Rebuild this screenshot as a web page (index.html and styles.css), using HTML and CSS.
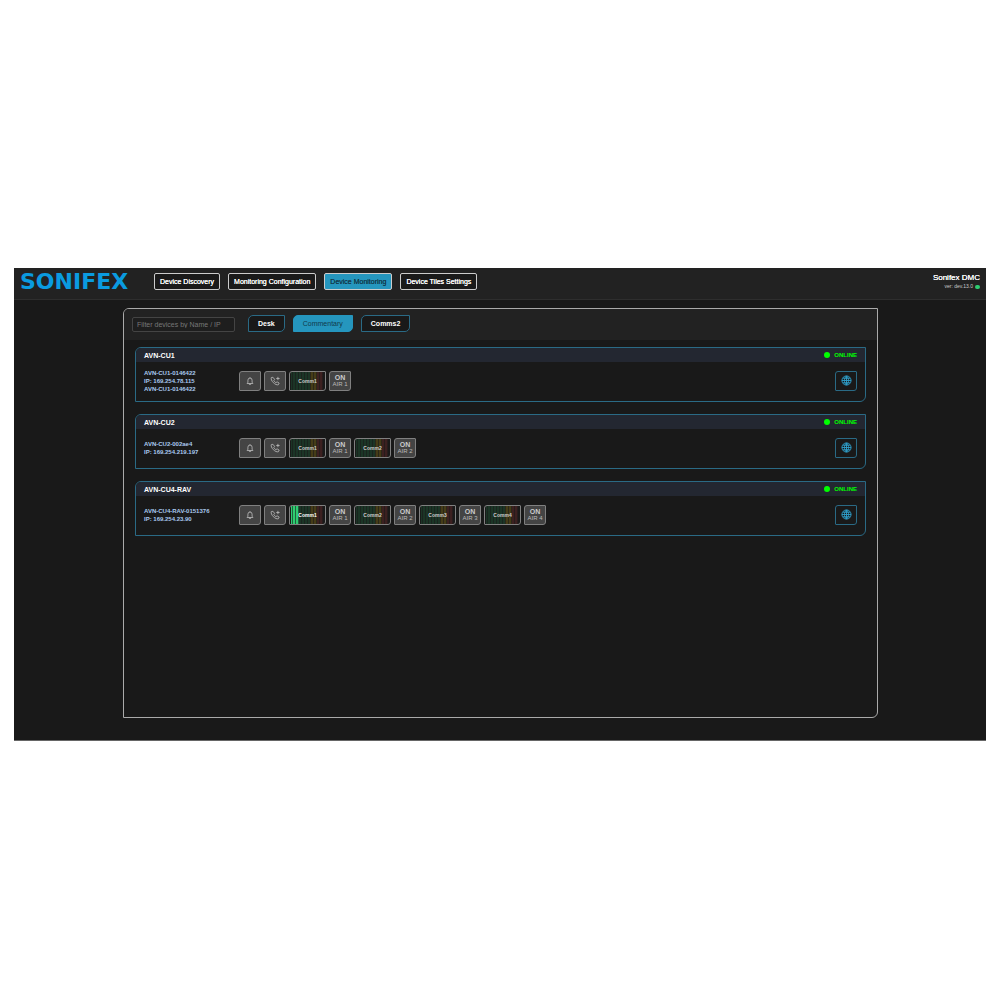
FILE: index.html
```html
<!DOCTYPE html>
<html lang="en">
<head>
    <meta charset="UTF-8">
    <meta name="viewport" content="width=device-width, initial-scale=1.0">
    <title>Sonifex DMC - Device Monitoring</title>
    <link rel="stylesheet" href="styles.css">
</head>
<body>
    <svg class="sprite" aria-hidden="true">
        <symbol id="bell" viewBox="0 0 24 24">
            <path d="M5 18h14l-2-3v-5a5 5 0 0 0-10 0v5z M10 18.500a2 2.500 0 0 0 4 0 M12 5V3"/>
        </symbol>
        <symbol id="phone" viewBox="0 0 24 24">
            <path d="M7 3 3 4c-1 3 1 8 5 12s9 6 12 5l2-4-5-3-3 2c-2-1-4-3-5-5l2-3z M15 6h8 M19 2v8"/>
        </symbol>
        <symbol id="globe" viewBox="0 0 24 24">
            <circle cx="12" cy="12" r="10"/>
            <path d="M2 12h20 M12 2v20 M4 7h16 M4 17h16 M12 2c-6 5-6 15 0 20 M12 2c6 5 6 15 0 20"/>
        </symbol>
    </svg>

    <div class="app">
        <header class="topbar">
            <div class="logo">SONIFEX</div>
            <nav class="menu">
                <button type="button">Device Discovery</button>
                <button type="button">Monitoring Configuration</button>
                <button type="button" class="active">Device Monitoring</button>
                <button type="button">Device Tiles Settings</button>
            </nav>
            <div class="version">
                <div class="product">Sonifex DMC</div>
                <div class="build">ver: dev.13.0 <span class="dot"></span></div>
            </div>
        </header>

        <main class="panel">
            <div class="toolbar">
                <input type="text" class="filter" placeholder="Filter devices by Name / IP" aria-label="Filter devices by Name / IP">
                <div class="tabs">
                    <button type="button">Desk</button>
                    <button type="button" class="active">Commentary</button>
                    <button type="button">Comms2</button>
                </div>
            </div>

            <div class="devices">
                <section class="device">
                    <div class="device-head">
                        <h2>AVN-CU1</h2>
                        <span class="status">ONLINE</span>
                    </div>
                    <div class="device-body">
                        <div class="info">AVN-CU1-0146422<br>IP: 169.254.78.115<br>AVN-CU1-0146422</div>
                        <div class="controls">
                            <button type="button" class="tile" aria-label="Alert"><svg><use href="#bell"/></svg></button>
                            <button type="button" class="tile" aria-label="Call"><svg><use href="#phone"/></svg></button>
                            <div class="meter"><span>Comm1</span></div>
                            <button type="button" class="tile"><b>ON</b>AIR 1</button>
                        </div>
                        <button type="button" class="web" aria-label="Open web page"><svg><use href="#globe"/></svg></button>
                    </div>
                </section>

                <section class="device">
                    <div class="device-head">
                        <h2>AVN-CU2</h2>
                        <span class="status">ONLINE</span>
                    </div>
                    <div class="device-body">
                        <div class="info">AVN-CU2-002ae4<br>IP: 169.254.219.197</div>
                        <div class="controls">
                            <button type="button" class="tile" aria-label="Alert"><svg><use href="#bell"/></svg></button>
                            <button type="button" class="tile" aria-label="Call"><svg><use href="#phone"/></svg></button>
                            <div class="meter"><span>Comm1</span></div>
                            <button type="button" class="tile"><b>ON</b>AIR 1</button>
                            <div class="meter"><span>Comm2</span></div>
                            <button type="button" class="tile"><b>ON</b>AIR 2</button>
                        </div>
                        <button type="button" class="web" aria-label="Open web page"><svg><use href="#globe"/></svg></button>
                    </div>
                </section>

                <section class="device">
                    <div class="device-head">
                        <h2>AVN-CU4-RAV</h2>
                        <span class="status">ONLINE</span>
                    </div>
                    <div class="device-body">
                        <div class="info">AVN-CU4-RAV-0151376<br>IP: 169.254.23.90</div>
                        <div class="controls">
                            <button type="button" class="tile" aria-label="Alert"><svg><use href="#bell"/></svg></button>
                            <button type="button" class="tile" aria-label="Call"><svg><use href="#phone"/></svg></button>
                            <div class="meter live"><span>Comm1</span></div>
                            <button type="button" class="tile"><b>ON</b>AIR 1</button>
                            <div class="meter"><span>Comm2</span></div>
                            <button type="button" class="tile"><b>ON</b>AIR 2</button>
                            <div class="meter"><span>Comm3</span></div>
                            <button type="button" class="tile"><b>ON</b>AIR 3</button>
                            <div class="meter"><span>Comm4</span></div>
                            <button type="button" class="tile"><b>ON</b>AIR 4</button>
                        </div>
                        <button type="button" class="web" aria-label="Open web page"><svg><use href="#globe"/></svg></button>
                    </div>
                </section>
            </div>
        </main>
    </div>
</body>
</html>
```
FILE: styles.css
```css
* {
    box-sizing: border-box;
}
body {
    margin: 0;
    padding: 268px 14px;
    background-color: #fff;
    font-family: "Liberation Sans", Arial, sans-serif;
    font-size: 7px;
    color: #fff;
}
button, input {
    font-family: inherit;
    font-size: 7px;
    margin: 0;
    color: #fff;
}
svg {
    fill: none;
    stroke: currentColor;
    stroke-width: 2;
}
.sprite {
    display: none;
}
.app {
    background-color: #191919;
    padding-bottom: 22px;
    border-bottom: 1px solid #666;
}

/* top bar */
.topbar {
    display: flex;
    align-items: center;
    height: 32px;
    padding: 0 6px 4px;
    background-color: #222;
    border-bottom: 1px solid #2e2e2e;
}
.logo {
    width: 134px;
    font-family: "DejaVu Sans", sans-serif;
    font-size: 22px;
    font-weight: bold;
    line-height: 24px;
    color: #0a9be0;
}
.menu {
    display: flex;
    gap: 8px;
}
.menu button {
    height: 17px;
    padding: 0 5px;
    background-color: #1a1a1a;
    border: 1px solid #ccc;
    border-radius: 2px;
    text-shadow: 0 0 currentColor;
    white-space: nowrap;
}
.menu button.active {
    background-color: #2596be;
    color: #123a4c;
}
.version {
    margin-left: auto;
    text-align: right;
}
.product {
    font-size: 8px;
    line-height: 10px;
    text-shadow: 0 0 currentColor;
}
.build {
    display: flex;
    align-items: center;
    justify-content: flex-end;
    gap: 2px;
    font-size: 5px;
    line-height: 7px;
    color: #ccc;
}
.dot {
    width: 5px;
    height: 4px;
    border-radius: 2px;
    background-color: #2ecc71;
}

/* main panel */
.panel {
    min-height: 410px;
    margin: 8px 108px 0 109px;
    border: 1px solid #aaa;
    border-radius: 6px 0 6px 0;
    overflow: hidden;
}
.toolbar {
    display: flex;
    align-items: flex-end;
    gap: 13px;
    height: 31px;
    padding: 0 8px 8px;
    background-color: #222;
}
.filter {
    width: 103px;
    height: 15px;
    padding: 0 4px;
    background-color: #1e1e1e;
    border: 1px solid #444;
    border-radius: 2px;
}
.filter::placeholder {
    color: #777;
    opacity: 1;
}
.tabs {
    display: flex;
    gap: 8px;
}
.tabs button {
    height: 17px;
    padding: 0 9px;
    background-color: #191919;
    border: 1px solid #2a6a85;
    border-radius: 5px 0 5px 0;
    font-weight: bold;
}
.tabs button.active {
    background-color: #2596be;
    border-color: #2596be;
    color: #123a4c;
    font-weight: normal;
}

/* device cards */
.devices {
    display: flex;
    flex-direction: column;
    gap: 12px;
    padding: 7px 11px;
}
.device {
    border: 1px solid #2a6a85;
    border-radius: 6px 0 6px 0;
    overflow: hidden;
}
.device-head {
    display: flex;
    align-items: center;
    justify-content: space-between;
    height: 14px;
    padding: 0 8px;
    background-color: #232731;
}
.device-head h2 {
    margin: 0;
    font-size: 7px;
}
.status {
    display: flex;
    align-items: center;
    gap: 4px;
    font-size: 6px;
    font-weight: bold;
    color: #0f0;
}
.status::before {
    content: "";
    width: 6px;
    height: 6px;
    border-radius: 50%;
    background-color: #0f0;
}
.device-body {
    display: flex;
    align-items: center;
    height: 39px;
    padding: 0 8px 2px;
}
.info {
    width: 95px;
    font-size: 6px;
    font-weight: bold;
    line-height: 8px;
    color: #a9c9f0;
    white-space: nowrap;
}
.controls {
    display: flex;
    gap: 3px;
}
.tile {
    display: flex;
    flex-direction: column;
    align-items: center;
    justify-content: center;
    width: 22px;
    height: 20px;
    padding: 0;
    background-color: #444;
    border: 1px solid #808080;
    border-radius: 3px 1px 3px 1px;
    font-size: 6px;
    line-height: 6px;
    color: #bbb;
    white-space: nowrap;
}
.tile b {
    font-size: 7px;
    line-height: 7px;
    color: #ccc;
}
.tile svg {
    width: 10px;
    height: 10px;
}
.meter {
    display: flex;
    align-items: center;
    justify-content: center;
    width: 37px;
    height: 20px;
    padding-top: 1px;
    border: 1px solid #808080;
    border-radius: 3px 1px 3px 1px;
    background:
        repeating-linear-gradient(90deg, transparent 0 2px, #19191999 2px 3px),
        linear-gradient(90deg, #191919 1px, #1b3526 1px 20px, #453c17 20px 27px, #3c2020 27px 33px, #191919 33px);
    font-size: 5px;
    font-weight: bold;
    color: #ccc;
}
.meter.live {
    background:
        repeating-linear-gradient(90deg, transparent 0 2px, #19191999 2px 3px),
        linear-gradient(90deg, #191919 1px, #2ecc71 1px 9px, #1b3526 9px 20px, #453c17 20px 27px, #3c2020 27px 33px, #191919 33px);
    color: #fff;
}
.web {
    display: flex;
    align-items: center;
    justify-content: center;
    width: 22px;
    height: 20px;
    margin-left: auto;
    padding: 0;
    background-color: #191919;
    border: 1px solid #2a6a85;
    border-radius: 3px 1px 3px 1px;
    color: #2f9fcb;
}
.web svg {
    width: 11px;
    height: 11px;
}
```
